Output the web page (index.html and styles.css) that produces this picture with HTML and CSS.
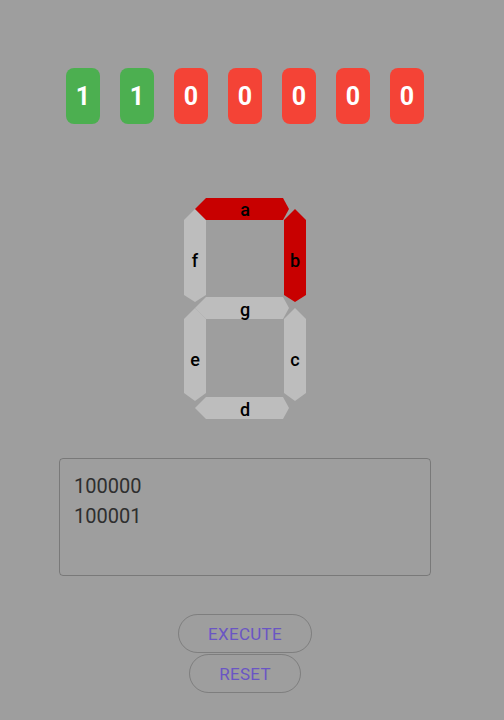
FILE: index.html
```html
<!DOCTYPE html>
<html>
<head>
<meta charset="utf-8">
<link rel="stylesheet" href="styles.css">
</head>
<body>
<div class="page">
  <div class="bits">
    <div class="bit on">1</div>
    <div class="bit on">1</div>
    <div class="bit off">0</div>
    <div class="bit off">0</div>
    <div class="bit off">0</div>
    <div class="bit off">0</div>
    <div class="bit off">0</div>
  </div>

  <svg class="seven" width="122" height="222" viewBox="0 0 122 222">
    <polygon class="seg" points="0,23 11,12 22,23 22,98 11,105 0,98"/>
    <polygon class="seg" points="0,122 11,111 22,122 22,196 11,204 0,196"/>
    <polygon class="seg" points="100,122 111,111 122,122 122,196 111,204 100,196"/>
    <polygon class="seg" points="11,111 22,100 99,100 105,111 99,122 22,122"/>
    <polygon class="seg" points="11,211 22,200 99,200 105,211 99,222 22,222"/>
    <polygon class="seg active" points="11,12 22,1 99,1 105,12 99,23 22,23"/>
    <polygon class="seg active" points="100,23 111,12 122,23 122,98 111,105 100,98"/>
    <text class="lbl" x="61" y="19">a</text>
    <text class="lbl" x="111" y="70">b</text>
    <text class="lbl" x="11" y="70">f</text>
    <text class="lbl" x="61" y="119">g</text>
    <text class="lbl" x="11" y="169">e</text>
    <text class="lbl" x="111" y="169">c</text>
    <text class="lbl" x="61" y="219">d</text>
  </svg>

  <div class="field">
    <div class="line">100000</div>
    <div class="line">100001</div>
  </div>

  <div class="actions">
    <button class="btn">EXECUTE</button>
    <button class="btn">RESET</button>
  </div>
</div>
</body>
</html>
```

FILE: styles.css
```css
html, body {
  margin: 0;
  padding: 0;
  background: #9e9e9e;
}
body {
  width: 504px;
  height: 720px;
  overflow: hidden;
  font-family: Roboto, "Liberation Sans", sans-serif;
}
.page {
  width: 490px;
  display: flex;
  flex-direction: column;
  align-items: center;
}
.bits {
  display: flex;
  gap: 20px;
  padding-top: 68px;
}
.bit {
  width: 34px;
  height: 56px;
  border-radius: 8px;
  color: #fff;
  font-size: 25px;
  font-weight: 700;
  display: flex;
  align-items: center;
  justify-content: center;
}
.bit.on { background: #4caf50; }
.bit.off { background: #f44336; }

.seven {
  display: block;
  margin-top: 73px;
}
.seg { fill: #bdbdbd; }
.seg.active { fill: #c80000; }
.lbl {
  font-family: Roboto, "Liberation Sans", sans-serif;
  font-size: 18px;
  font-weight: 500;
  fill: #000;
  text-anchor: middle;
}

.field {
  box-sizing: border-box;
  width: 372px;
  height: 118px;
  margin-top: 39px;
  border: 1px solid rgba(0,0,0,0.23);
  border-radius: 4px;
  padding: 12px 14px;
  font-size: 20px;
  line-height: 30px;
  color: #2e2e2e;
}

.actions {
  margin-top: 38px;
  display: flex;
  flex-direction: column;
  align-items: center;
  gap: 1px;
}
.btn {
  box-sizing: border-box;
  height: 39px;
  padding: 0 29px;
  border: 1px solid rgba(0,0,0,0.2);
  border-radius: 20px;
  background: transparent;
  color: #6a55c4;
  font-family: Roboto, "Liberation Sans", sans-serif;
  font-size: 17px;
  font-weight: 400;
  letter-spacing: 0.3px;
}
```
